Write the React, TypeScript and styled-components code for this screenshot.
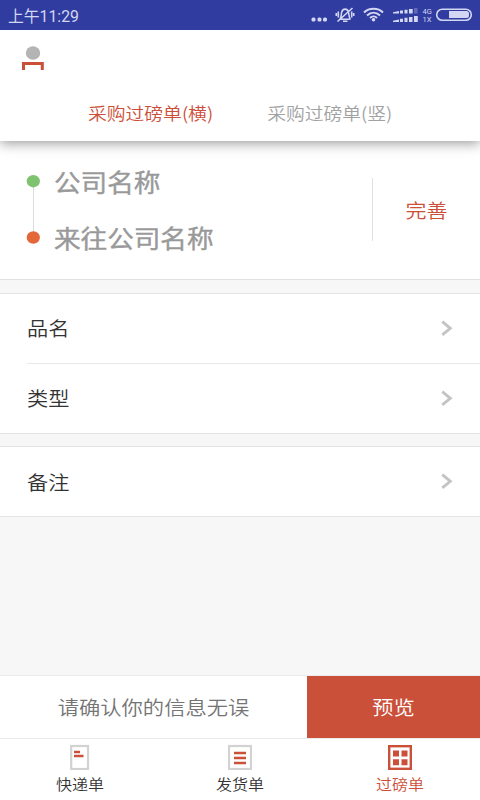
import React from "react";
import styled, { createGlobalStyle } from "styled-components";

const RED = "#cb503a";

const GlobalStyle = createGlobalStyle`
  * { box-sizing: border-box; }
  body { margin: 0; background: #f7f7f7; font-family: "Noto Sans CJK SC", "Noto Sans", sans-serif; }
`;

const Screen = styled.div`
  width: 480px;
  height: 800px;
  display: flex;
  flex-direction: column;
  background: #f7f7f7;
  overflow: hidden;
`;

const Label = styled.span<{ $size: number; $color: string; $stroke?: number; $shift?: number }>`
  display: inline-block;
  font-size: ${(p) => p.$size}px;
  font-weight: 350;
  line-height: 1.2;
  white-space: nowrap;
  color: ${(p) => p.$color};
  -webkit-text-stroke: ${(p) => p.$stroke ?? 0}px ${(p) => p.$color};
  transform: translateY(${(p) => p.$shift ?? 0}px) scaleY(0.92);
`;

const StatusBar = styled.div`
  height: 30px;
  flex: none;
  display: flex;
  align-items: center;
  justify-content: space-between;
  position: relative;
  z-index: 2;
  padding-left: 8px;
  background: #303c9f;
`;

const Clock = styled.span`
  padding-top: 3px;
  font: 15.8px/27px Roboto, "Noto Sans CJK SC", sans-serif;
  color: #d3d7f4;
`;

const Header = styled.header`
  height: 111px;
  flex: none;
  display: flex;
  flex-direction: column;
  justify-content: space-between;
  position: relative;
  z-index: 1;
  background: #fff;
  box-shadow: 0 2px 12px rgba(0, 0, 0, 0.42);
`;

const UserButton = styled.div`
  padding: 15px 0 0 21px;
  line-height: 0;
`;

const TopTabs = styled.nav`
  display: flex;
  gap: 54px;
  padding: 0 0 15px 88px;
`;

const Company = styled.section`
  height: 139px;
  flex: none;
  display: flex;
  background: #fff;
  border-bottom: 1px solid #e2e2e2;
`;

const Timeline = styled.div`
  padding: 33px 0 0 26px;
  width: 54px;
  line-height: 0;
`;

const Names = styled.div`
  flex: 1;
  display: flex;
  flex-direction: column;
  gap: 24px;
  padding-top: 26px;
`;

const Complete = styled.div`
  width: 108px;
  height: 63px;
  margin-top: 37px;
  display: flex;
  align-items: center;
  justify-content: center;
  border-left: 1px solid #e1e1e1;
`;

const Group = styled.section`
  flex: none;
  margin-top: 13px;
  padding-left: 27px;
  background: #fff;
  border-top: 1px solid #e4e4e4;
  border-bottom: 1px solid #e4e4e4;
  & + & { margin-top: 12px; }
`;

const Row = styled.div`
  height: 69px;
  display: flex;
  align-items: center;
  justify-content: space-between;
  padding-right: 27px;
  & + & { height: 70px; border-top: 1px solid #e8e8e8; }
`;

const Spacer = styled.div`
  flex: 1;
`;

const ActionBar = styled.div`
  height: 64px;
  flex: none;
  display: flex;
  padding: 1px 0;
  background: #ebebeb;
`;

const Hint = styled.div`
  width: 307px;
  display: flex;
  align-items: center;
  justify-content: center;
  background: #fff;
`;

const Preview = styled.div`
  flex: 1;
  display: flex;
  align-items: center;
  justify-content: center;
  background: ${RED};
`;

const BottomBar = styled.nav`
  height: 61px;
  flex: none;
  display: grid;
  grid-template-columns: repeat(3, 1fr);
  background: #fff;
`;

const BottomTab = styled.div`
  display: flex;
  flex-direction: column;
  align-items: center;
  gap: 5px;
  padding-top: 5px;
`;

const StatusIcons = () => (
  <svg width="172" height="30" viewBox="308 0 172 30" fill="none">
    <g fill="#d3d7f4">
      <rect x="311.5" y="17.5" width="4" height="4" rx="1.5" />
      <rect x="317.5" y="17.5" width="4" height="4" rx="1.5" />
      <rect x="323" y="17.5" width="4" height="4" rx="1.5" />
      <circle cx="373.5" cy="19.8" r="1.8" />
      <path d="M393 13.5v-1.200l6-1.300v2.500zM400 10.500h3V13.500h-3zM404.500 9.800h3V13.500h-3zM409 9h3.700v4.500H409z" />
      <path d="M393 22v-1.200l6-1.300V22zM400 18.700h3V22h-3zM404.500 17.800h3V22h-3zM409 17h3.500v5H409zM414 16h3.800v6H414z" />
      <path d="M414 8h3.500v5.500H414z" opacity=".3" />
      <path d="M449 11h17.500a2.500 2.500 0 0 1 2.500 2.500v2a2.500 2.500 0 0 1-2.500 2.500H449z" />
    </g>
    <g stroke="#d3d7f4" strokeWidth="1.6">
      <path d="M339.500 19.200h11M340 19c1.700-2 1-4.500 1.600-6.500 1-4.500 6-4.500 7 0 .5 2 0 4.500 1.700 6.500M343 21.200h4.500M352.500 8l-15 13.500M338.300 11.500v6M336.300 13v3M351.700 11.500v6M353.700 13v3" />
      <path d="M364 12.500c5-5 14-5 19 0M367 15.500c4-3.700 9-3.700 13 0M370 18c2-2 5-2 7 0" strokeWidth="2" />
      <rect x="436.7" y="9.2" width="34.6" height="11" rx="5.5" />
    </g>
    <g fill="#d3d7f4" fontFamily="Roboto, sans-serif" fontSize="7.5">
      <text x="422.5" y="14">4G</text>
      <text x="422.5" y="22">1X</text>
    </g>
  </svg>
);

const UserIcon = () => (
  <svg width="24" height="26" viewBox="21 45 24 26">
    <ellipse cx="33" cy="53" rx="7.2" ry="6.8" fill="#b4b4b4" />
    <path d="M23.500 70v-6.500h18.800V70" fill="none" stroke={RED} strokeWidth="3" />
  </svg>
);

const RouteIcon = () => (
  <svg width="15" height="72" viewBox="26 174 15 72">
    <path d="M33.500 182v56" stroke="#dcdcdc" />
    <ellipse cx="33.3" cy="181.2" rx="6.6" ry="6.2" fill="#7fc371" />
    <ellipse cx="33.3" cy="237.5" rx="6.6" ry="6.2" fill="#e4673a" />
  </svg>
);

const Chevron = () => (
  <svg width="13" height="18" viewBox="0 0 13 18">
    <path d="M2.300 1.700l8 6.600-8 6.600" fill="none" stroke="#c4c4c4" strokeWidth="2.9" />
  </svg>
);

const ExpressIcon = () => (
  <svg width="20" height="26" viewBox="70 744 20 26">
    <rect x="71.2" y="746" width="16.8" height="23" fill="#fff" stroke="#d2d2d2" strokeWidth="2.2" />
    <path d="M74 752h6M74 756h9.500" stroke={RED} strokeWidth="2.4" />
  </svg>
);

const DeliveryIcon = () => (
  <svg width="24" height="26" viewBox="228 744 24 26">
    <rect x="229" y="746" width="22" height="23" fill="#fff" stroke="#d2d2d2" strokeWidth="2.2" />
    <path d="M234 753h12M234 758h12M234 763h12" stroke={RED} strokeWidth="2.4" />
  </svg>
);

const WeighIcon = () => (
  <svg width="24" height="26" viewBox="388 744 24 26">
    <rect x="389.2" y="746.2" width="21.6" height="22.6" fill="#fff" stroke={RED} strokeWidth="2.4" />
    <path d="M393 750.500h6v6h-6zM401.500 750.500h6v6h-6zM393 759.300h6v6h-6zM401.500 759.300h6v6h-6z" fill={RED} />
  </svg>
);

export default function App() {
  return (
    <>
      <GlobalStyle />
      <Screen>
        <StatusBar>
          <Clock>上午11:29</Clock>
          <StatusIcons />
        </StatusBar>
        <Header>
          <UserButton><UserIcon /></UserButton>
          <TopTabs>
            <Label $size={18.8} $color={RED} $shift={-1}>采购过磅单(横)</Label>
            <Label $size={18.8} $color="#a2a2a2" $shift={-1}>采购过磅单(竖)</Label>
          </TopTabs>
        </Header>
        <Company>
          <Timeline><RouteIcon /></Timeline>
          <Names>
            <Label $size={26.6} $color="#999" $stroke={0.6} $shift={-1}>公司名称</Label>
            <Label $size={26.6} $color="#999" $stroke={0.6} $shift={-1}>来往公司名称</Label>
          </Names>
          <Complete><Label $size={21} $color={RED} $shift={1}>完善</Label></Complete>
        </Company>
        <Group>
          <Row><Label $size={21.2} $color="#333" $shift={-1}>品名</Label><Chevron /></Row>
          <Row><Label $size={21.2} $color="#333" $shift={-1}>类型</Label><Chevron /></Row>
        </Group>
        <Group>
          <Row><Label $size={21.2} $color="#333">备注</Label><Chevron /></Row>
        </Group>
        <Spacer />
        <ActionBar>
          <Hint><Label $size={21.3} $color="#747474">请确认你的信息无误</Label></Hint>
          <Preview><Label $size={21.3} $color="#fff">预览</Label></Preview>
        </ActionBar>
        <BottomBar>
          <BottomTab><ExpressIcon /><Label $size={16} $color="#333">快递单</Label></BottomTab>
          <BottomTab><DeliveryIcon /><Label $size={16} $color="#333">发货单</Label></BottomTab>
          <BottomTab><WeighIcon /><Label $size={16} $color={RED}>过磅单</Label></BottomTab>
        </BottomBar>
      </Screen>
    </>
  );
}
